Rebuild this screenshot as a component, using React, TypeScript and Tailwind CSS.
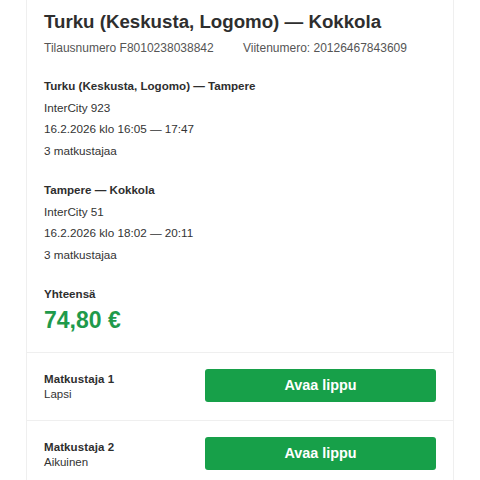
import React from "react";

const legs = [
  {
    title: "Turku (Keskusta, Logomo) — Tampere",
    train: "InterCity 923",
    time: "16.2.2026 klo 16:05 — 17:47",
    pax: "3 matkustajaa",
  },
  {
    title: "Tampere — Kokkola",
    train: "InterCity 51",
    time: "16.2.2026 klo 18:02 — 20:11",
    pax: "3 matkustajaa",
  },
];

const passengers = [
  { name: "Matkustaja 1", type: "Lapsi" },
  { name: "Matkustaja 2", type: "Aikuinen" },
];

export default function App() {
  return (
    <div
      className="w-[480px] h-[480px] overflow-hidden bg-white text-[#333333]"
      style={{ fontFamily: '"Liberation Sans", Arial, sans-serif' }}
    >
      <div className="mx-[26px] border-x border-[#efefef] min-h-[480px]">
        <div className="px-[17px] pt-[10px] pb-[17px]">
          <h1 className="text-[18.7px] leading-[24px] font-bold text-[#2e2e2e]">
            Turku (Keskusta, Logomo) — Kokkola
          </h1>
          <div className="mt-[5px] flex text-[12px] leading-[18px] text-[#555555]">
            <span className="w-[199px]">Tilausnumero F8010238038842</span>
            <span>Viitenumero: 20126467843609</span>
          </div>
          {legs.map((l) => (
            <div key={l.title} className="mt-[18px] text-[11.7px] leading-[21.5px]">
              <div className="font-bold text-[11.6px] text-[#2e2e2e]">{l.title}</div>
              <div>{l.train}</div>
              <div>{l.time}</div>
              <div>{l.pax}</div>
            </div>
          ))}
          <div className="mt-[18px] text-[11.6px] leading-[21.5px] font-bold text-[#2e2e2e]">
            Yhteensä
          </div>
          <div className="text-[23px] leading-[30px] font-bold text-[#1f9a4b]">74,80 €</div>
        </div>
        {passengers.map((p) => (
          <div
            key={p.name}
            className="border-t border-[#efefef] px-[17px] pt-[16px] pb-[17px] flex items-center"
          >
            <div className="flex-1 pt-[3px] text-[11.5px] leading-[15.6px]">
              <div className="font-bold text-[#2e2e2e] tracking-[0.1px]">{p.name}</div>
              <div>{p.type}</div>
            </div>
            <button className="w-[231px] h-[33px] rounded-[3px] bg-[#17a049] text-white font-bold text-[14.4px]">
              Avaa lippu
            </button>
          </div>
        ))}
      </div>
    </div>
  );
}
